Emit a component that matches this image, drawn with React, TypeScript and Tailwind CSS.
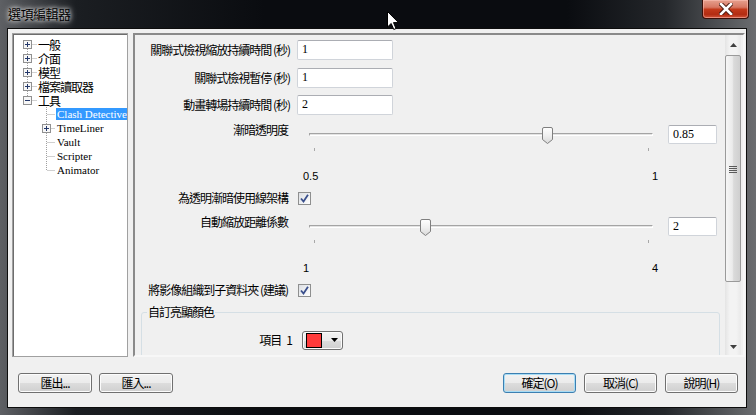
import React from "react";

type TreeNode = {
  label: string;
  level: 0 | 1;
  box?: "plus" | "minus";
  first?: boolean;
  last?: boolean;
  selected?: boolean;
};

const treeNodes: TreeNode[] = [
  { label: "一般", level: 0, box: "plus", first: true },
  { label: "介面", level: 0, box: "plus" },
  { label: "模型", level: 0, box: "plus" },
  { label: "檔案讀取器", level: 0, box: "plus" },
  { label: "工具", level: 0, box: "minus", last: true },
  { label: "Clash Detective", level: 1, selected: true, first: true },
  { label: "TimeLiner", level: 1, box: "plus" },
  { label: "Vault", level: 1 },
  { label: "Scripter", level: 1 },
  { label: "Animator", level: 1, last: true },
];

function Gutter({ node }: { node: TreeNode }) {
  const w = node.level === 0 ? 24 : 42;
  const cx = node.level === 0 ? 13.5 : 32.5;
  const bx = node.level === 0 ? 9 : 28;
  const y1 = node.first && node.level === 0 ? 8 : 0;
  const y2 = node.last ? 7 : 14;
  return (
    <svg width={w} height="14" className="shrink-0">
      <line x1={cx} x2={cx} y1={y1} y2={y2} stroke="#a0a0a0" strokeDasharray="1 1" />
      <line x1={cx + 1} x2={w - 1} y1="7.5" y2="7.5" stroke="#a0a0a0" strokeDasharray="1 1" />
      {node.box && (
        <g>
          <rect x={bx + 0.5} y="3.5" width="8" height="8" fill="#f7f7f7" stroke="#919191" />
          <line x1={bx + 2} x2={bx + 7} y1="7.5" y2="7.5" stroke="#24386a" />
          {node.box === "plus" && (
            <line x1={bx + 4.5} x2={bx + 4.5} y1="5" y2="10" stroke="#24386a" />
          )}
        </g>
      )}
    </svg>
  );
}

function Tree() {
  return (
    <div className="w-[116px] h-[324px] shrink-0 border border-[#a0a0a0] bg-white overflow-hidden">
      <div className="h-full border-l border-t border-[#6d6d6d] pt-[2px]">
        {treeNodes.map((n) => (
          <div key={n.label} className="flex items-center h-[14px] whitespace-nowrap">
            <Gutter node={n} />
            {n.level === 0 ? (
              <span className="text-[12px] tracking-[-1px] leading-[13px] text-black">{n.label}</span>
            ) : (
              <span
                className={
                  n.selected
                    ? "font-['Liberation_Serif',serif] text-[11px] leading-[12px] px-[1px] bg-[#3399ff] text-white"
                    : "font-['Liberation_Serif',serif] text-[11px] leading-[12px] px-[1px] text-black"
                }
              >
                {n.label}
              </span>
            )}
          </div>
        ))}
      </div>
    </div>
  );
}

function TextField({ value, className }: { value: string; className: string }) {
  return (
    <div
      className={
        "bg-white border border-[#d0d4da] border-t-[#abadb3] rounded-[2px] pl-[4px] pt-[1px] font-['Liberation_Serif',serif] text-[12px] leading-[14px] text-black " +
        className
      }
    >
      {value}
    </div>
  );
}

function Checkbox({ className }: { className: string }) {
  return (
    <div
      className={
        "w-[13px] h-[13px] border border-[#8e8f8f] bg-[linear-gradient(135deg,#dcdfe3,#ffffff)] flex items-center justify-center " +
        className
      }
    >
      <svg width="9" height="9" viewBox="0 0 9 9">
        <path d="M1 4.5 L3.5 7.5 L8 0.8" fill="none" stroke="#3a4f8c" strokeWidth="1.8" />
      </svg>
    </div>
  );
}

function Slider({ value, min, max }: { value: number; min: number; max: number }) {
  const center = 5 + ((value - min) / (max - min)) * 334;
  return (
    <div className="relative ml-[19px] w-[344px] h-[30px] shrink-0">
      <div className="mt-[10px] h-[3px] border-t border-l border-[#a4a4a4] border-b border-b-white border-r border-r-white bg-[#e3e3e3]" />
      <svg
        width="11"
        height="18"
        className="absolute top-[4px]"
        style={{ left: center - 5.5 }}
      >
        <defs>
          <linearGradient id="thumbFill" x1="0" y1="0" x2="0" y2="1">
            <stop offset="0" stopColor="#ffffff" />
            <stop offset="0.5" stopColor="#f0f0f0" />
            <stop offset="1" stopColor="#d8d8d8" />
          </linearGradient>
        </defs>
        <path
          d="M0.5 2 Q0.5 0.5 2 0.5 H9 Q10.5 0.5 10.5 2 V12.5 L5.5 16.5 L0.5 12.5 Z"
          fill="url(#thumbFill)"
          stroke="#7f7f7f"
        />
      </svg>
      <div className="absolute left-[5px] top-[25px] w-px h-[3px] bg-[#a8a8a8]" />
      <div className="absolute left-[339px] top-[25px] w-px h-[3px] bg-[#a8a8a8]" />
    </div>
  );
}

const labelCls = "text-right text-[12px] tracking-[-1px] leading-[14px] text-black shrink-0 whitespace-nowrap";

function Scrollbar() {
  return (
    <div className="w-[16px] mr-[2px] shrink-0 flex flex-col bg-[linear-gradient(90deg,#e4e4e4,#f3f3f3_30%,#f3f3f3_70%,#e9e9e9)]">
      <div className="h-[20px] flex items-center justify-center">
        <svg width="7" height="4">
          <path d="M0 4 L3.5 0 L7 4 Z" fill="#404040" />
        </svg>
      </div>
      <div className="h-[227px] rounded-[2px] border border-[#9a9a9a] bg-[linear-gradient(90deg,#f6f6f6,#ebebeb_45%,#dadada_55%,#cfcfcf)] flex items-center justify-center">
        <svg width="8" height="8">
          <line x1="0" x2="8" y1="1.5" y2="1.5" stroke="#5a5a5a" />
          <line x1="0" x2="8" y1="3.5" y2="3.5" stroke="#5a5a5a" />
          <line x1="0" x2="8" y1="5.5" y2="5.5" stroke="#5a5a5a" />
          <line x1="0" x2="8" y1="7.5" y2="7.5" stroke="#5a5a5a" />
        </svg>
      </div>
      <div className="flex-1" />
      <div className="h-[17px] flex items-center justify-center">
        <svg width="7" height="4">
          <path d="M0 0 L7 0 L3.5 4 Z" fill="#404040" />
        </svg>
      </div>
    </div>
  );
}

function Options() {
  return (
    <div className="flex-1 h-[324px] flex overflow-hidden border-2 border-t-[#8a8a8a] border-l-[#8a8a8a] border-r-[#f7f7f7] border-b-[#f7f7f7] bg-[#f0f0f0]">
      <div className="flex-1 flex flex-col pt-[5px] overflow-hidden">
        <div className="flex items-center h-[20px]">
          <div className={"w-[155px] " + labelCls}>關聯式檢視縮放持續時間 (秒)</div>
          <TextField value="1" className="ml-[7px] w-[96px] h-[20px]" />
        </div>
        <div className="flex items-center h-[20px] mt-[8px]">
          <div className={"w-[155px] " + labelCls}>關聯式檢視暫停 (秒)</div>
          <TextField value="1" className="ml-[7px] w-[96px] h-[20px]" />
        </div>
        <div className="flex items-center h-[20px] mt-[7px]">
          <div className={"w-[155px] " + labelCls}>動畫轉場持續時間 (秒)</div>
          <TextField value="2" className="ml-[7px] w-[96px] h-[20px]" />
        </div>

        <div className="flex items-start h-[30px] mt-[8px]">
          <div className={"w-[153px] " + labelCls}>漸暗透明度</div>
          <div className="w-[2px]" />
          <Slider value={0.85} min={0.5} max={1} />
          <TextField value="0.85" className="ml-[15px] mt-[2px] w-[49px] h-[19px]" />
        </div>
        <div className="ml-[168px] mt-[16px] w-[355px] h-[14px] flex justify-between font-['Liberation_Sans',sans-serif] text-[11px] leading-[14px] text-black">
          <span>0.5</span>
          <span>1</span>
        </div>

        <div className="flex items-center h-[14px] mt-[8px]">
          <div className={"w-[153px] " + labelCls}>為透明漸暗使用線架構</div>
          <Checkbox className="ml-[10px]" />
        </div>

        <div className="flex items-start h-[30px] mt-[10px]">
          <div className={"w-[153px] " + labelCls}>自動縮放距離係數</div>
          <div className="w-[2px]" />
          <Slider value={2} min={1} max={4} />
          <TextField value="2" className="ml-[15px] mt-[2px] w-[49px] h-[19px]" />
        </div>
        <div className="ml-[168px] mt-[16px] w-[355px] h-[14px] flex justify-between font-['Liberation_Sans',sans-serif] text-[11px] leading-[14px] text-black">
          <span>1</span>
          <span>4</span>
        </div>

        <div className="flex items-center h-[14px] mt-[8px]">
          <div className={"w-[153px] " + labelCls}>將影像組織到子資料夾 (建議)</div>
          <Checkbox className="ml-[10px]" />
        </div>

        <fieldset className="ml-[6px] mt-[8px] w-[579px] shrink-0 border border-[#d5dfe5] rounded-[3px] pb-[30px]">
          <legend className="ml-[5px] px-[1px] text-[12px] tracking-[-1px] leading-[14px] text-black">
            自訂亮顯顏色
          </legend>
          <div className="flex items-center h-[20px] mt-[11px]">
            <div className={"w-[150px] " + labelCls}>
              項目<span className="ml-[5px]">1</span>
            </div>
            <div className="ml-[10px] w-[41px] h-[19px] flex items-center rounded-[3px] border border-[#707070] bg-[linear-gradient(#f2f2f2_0%,#ebebeb_50%,#dddddd_50%,#cfcfcf_100%)] shadow-[inset_0_0_0_1px_#fcfcfc]">
              <div className="ml-[3px] w-[16px] h-[15px] bg-[#ff3b3b] border border-black" />
              <svg width="7" height="4" className="ml-[9px]">
                <path d="M0 0 L7 0 L3.5 4 Z" fill="#000000" />
              </svg>
            </div>
          </div>
        </fieldset>
      </div>
      <Scrollbar />
    </div>
  );
}

function WinButton({ label, primary, wide }: { label: string; primary?: boolean; wide?: boolean }) {
  return (
    <div
      className={
        (wide ? "w-[74px] " : "w-[73px] ") +
        (primary
          ? "border-[#3c7fb1] shadow-[inset_0_0_0_1px_#a7dcf5] "
          : "border-[#707070] shadow-[inset_0_0_0_1px_#fcfcfc] ") +
        "h-[20px] rounded-[3px] border flex items-center justify-center bg-[linear-gradient(#f2f2f2_0%,#ebebeb_50%,#dddddd_50%,#cfcfcf_100%)] text-[12px] tracking-[-1px] leading-[14px] text-black"
      }
    >
      {label}
    </div>
  );
}

function TitleBar() {
  return (
    <div className="h-[28px] shrink-0 flex items-start justify-between">
      <div className="pl-[8px] pt-[6px] text-[13px] tracking-[-0.5px] leading-[16px] text-black [text-shadow:0_0_4px_#ffffff,0_0_7px_#d0d0d0]">
        選項編輯器
      </div>
      <div className="mr-[7px] w-[47px] h-[19px] rounded-b-[4px] border border-t-0 border-[#3b0f08] bg-[linear-gradient(#e6a08e_0%,#d77863_40%,#c3391a_52%,#b32c12_80%,#d2553a_100%)] shadow-[inset_0_0_0_1px_rgba(255,200,190,0.5)] flex items-center justify-center">
        <svg width="14" height="12" viewBox="0 0 14 12">
          <path d="M2 1 L12 11 M12 1 L2 11" stroke="#4a1a10" strokeWidth="4.5" strokeLinecap="square" />
          <path d="M2 1 L12 11 M12 1 L2 11" stroke="#ffffff" strokeWidth="2.6" strokeLinecap="square" />
        </svg>
      </div>
    </div>
  );
}

export default function App() {
  return (
    <div className="relative w-[756px] h-[415px] overflow-hidden flex flex-col bg-[linear-gradient(90deg,#5e6064_0%,#1b1e22_10%,#0a0c10_35%,#0a0c10_75%,#24272b_88%,#6b6d70_100%)] font-['Noto_Sans_CJK_TC',sans-serif]">
      <TitleBar />
      <div className="ml-[7px] mr-[9px] h-[380px] shrink-0 border border-[#0d0d0d] bg-[#f0f0f0] flex flex-col">
        <div className="flex pt-[4px] pl-[4px] pr-[1px] gap-[5px] h-[328px] shrink-0">
          <Tree />
          <Options />
        </div>
        <div className="flex justify-between mt-[16px] pl-[10px] pr-[8px]">
          <div className="flex gap-[7px]">
            <WinButton label="匯出..." wide />
            <WinButton label="匯入..." wide />
          </div>
          <div className="flex gap-[8px]">
            <WinButton label="確定(O)" primary />
            <WinButton label="取消(C)" />
            <WinButton label="說明(H)" />
          </div>
        </div>
      </div>
      <svg width="13" height="20" viewBox="0 0 13 20" className="absolute left-[387px] top-[11px]">
        <path
          d="M0.5 0.5 L0.5 16 L4.2 12.5 L6.8 18.5 L9 17.5 L6.5 11.6 L11.5 11.6 Z"
          fill="#ffffff"
          stroke="#000000"
          strokeLinejoin="round"
        />
      </svg>
    </div>
  );
}
